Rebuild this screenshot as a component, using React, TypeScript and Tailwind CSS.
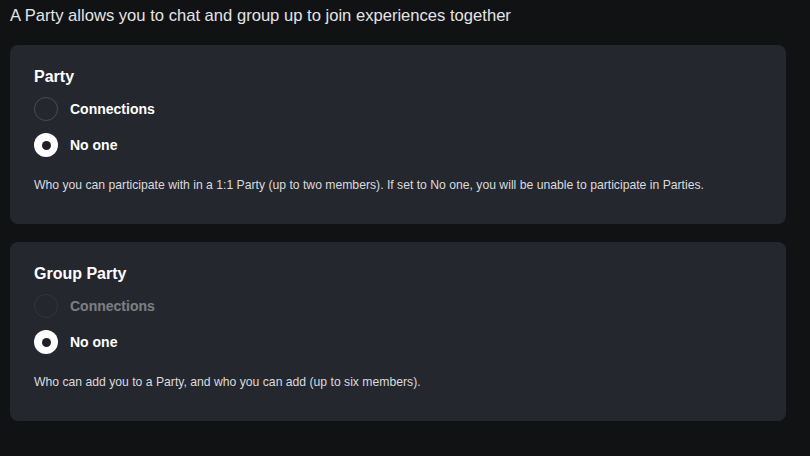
import React, { useState } from "react";

type Choice = "connections" | "none";

type Section = {
  id: string;
  title: string;
  desc: string;
  connectionsDisabled?: boolean;
};

const sections: Section[] = [
  {
    id: "party",
    title: "Party",
    desc: "Who you can participate with in a 1:1 Party (up to two members). If set to No one, you will be unable to participate in Parties.",
  },
  {
    id: "group",
    title: "Group Party",
    desc: "Who can add you to a Party, and who you can add (up to six members).",
    connectionsDisabled: true,
  },
];

function Radio({
  label,
  checked,
  disabled,
  onSelect,
}: {
  label: string;
  checked: boolean;
  disabled?: boolean;
  onSelect: () => void;
}) {
  return (
    <button
      type="button"
      disabled={disabled}
      onClick={onSelect}
      className={`flex h-6 items-center gap-3 text-left ${disabled ? "opacity-40 cursor-not-allowed" : ""}`}
    >
      {checked ? (
        <span className="flex h-6 w-6 items-center justify-center rounded-full bg-white">
          <span className="h-[9px] w-[9px] rounded-full bg-[#1f2026]" />
        </span>
      ) : (
        <span className="h-6 w-6 rounded-full border border-[#4a4c54]" />
      )}
      <span className="text-[14px] font-bold leading-5 text-white">{label}</span>
    </button>
  );
}

function SettingCard({ section }: { section: Section }) {
  const [value, setValue] = useState<Choice>("none");

  return (
    <div className="rounded-lg bg-[#25272e] px-6 pt-[22px] pb-[31px]">
      <h3 className="text-[16px] font-semibold leading-5 text-white">{section.title}</h3>
      <div className="mt-[10px] flex flex-col gap-3">
        <Radio
          label="Connections"
          checked={value === "connections"}
          disabled={section.connectionsDisabled}
          onSelect={() => setValue("connections")}
        />
        <Radio label="No one" checked={value === "none"} onSelect={() => setValue("none")} />
      </div>
      <p className="mt-5 text-[12.2px] leading-4 text-[#dadbde]">{section.desc}</p>
    </div>
  );
}

export default function App() {
  return (
    <div
      className="min-h-[456px] w-full bg-[#111214] pl-[10px] pr-6"
      style={{ fontFamily: '"Liberation Sans", Arial, sans-serif' }}
    >
      <p className="pt-[6px] text-[16.6px] leading-5 text-[#e3e4e7]">
        A Party allows you to chat and group up to join experiences together
      </p>
      <div className="mt-[19px] flex flex-col gap-[18px]">
        {sections.map((s) => (
          <SettingCard key={s.id} section={s} />
        ))}
      </div>
    </div>
  );
}
